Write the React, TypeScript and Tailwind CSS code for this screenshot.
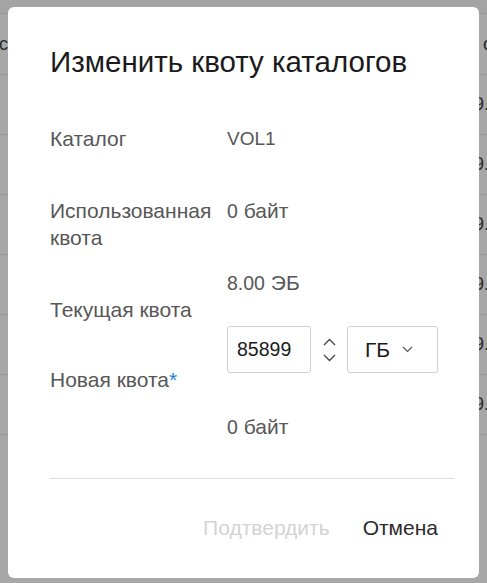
import React from "react";

const font = { fontFamily: '"Liberation Sans", Arial, sans-serif' };

function BgRow({ right }: { right: string }) {
  return (
    <div className="h-[60px] border-b border-[#989898] flex items-center justify-end text-[18px] text-[#2a2a2a]">
      <span className="-mr-[2px]">{right}</span>
    </div>
  );
}

export default function App() {
  return (
    <div className="relative w-[487px] h-[583px] bg-[#a7a7a7] overflow-hidden" style={font}>
      {/* background table */}
      <div className="h-[14px] bg-[#a4a4a4] border-b border-[#989898]" />
      <div className="flex flex-col">
        <div className="h-[61px] border-b border-[#989898] flex items-center justify-between text-[18px] text-[#2a2a2a]">
          <span className="-ml-[1px]">ст</span>
          <span className="-mr-[6px]">о</span>
        </div>
        <BgRow right="9." />
        <BgRow right="9." />
        <BgRow right="9." />
        <BgRow right="9." />
        <BgRow right="9." />
        <BgRow right="9." />
      </div>

      {/* modal */}
      <div className="absolute left-[8px] top-[7px] w-[471px] h-[571px] bg-white rounded-[6px] pl-[42px] pr-[25px]">
        <h2 className="pt-[38px] text-[29.5px] leading-[34px] text-[#1b1b1b] whitespace-nowrap">Изменить квоту каталогов</h2>

        <div className="text-[21px] leading-[27px] text-[#575757]">
          <div className="flex mt-[46px]">
            <div className="w-[177px]">Каталог</div>
            <div className="text-[19px]">VOL1</div>
          </div>

          <div className="flex mt-[45px]">
            <div className="w-[177px]">Использованная квота</div>
            <div>
              <span className="text-[19.5px]">0</span> байт
            </div>
          </div>

          <div className="flex mt-[18px]">
            <div className="w-[177px] flex flex-col pt-[27px]">
              <div>Текущая квота</div>
              <div className="mt-[43px]">
                Новая квота<span className="text-[#1e7fd8]">*</span>
              </div>
            </div>
            <div className="flex flex-col">
              <div>
                <span className="text-[19.5px]">8.00</span> ЭБ
              </div>
              <div className="flex items-center mt-[29px]">
                <div className="w-[84px] h-[47px] border border-[#cfcfcf] rounded-[3px] flex items-center pl-[9px] text-[19.5px] text-[#1b1b1b]">
                  85899
                </div>
                <div className="w-[36px] h-[47px] flex flex-col items-center justify-center gap-[8px]">
                  <svg width="13" height="8" viewBox="0 0 13 8" fill="none">
                    <path d="M1 7L6.5 1.5L12 7" stroke="#444" strokeWidth="1.3" />
                  </svg>
                  <svg width="13" height="8" viewBox="0 0 13 8" fill="none">
                    <path d="M1 1L6.5 6.5L12 1" stroke="#444" strokeWidth="1.3" />
                  </svg>
                </div>
                <div className="w-[91px] h-[47px] border border-[#cfcfcf] rounded-[3px] flex items-center pl-[17px] text-[21px] text-[#1b1b1b]">
                  <span>ГБ</span>
                  <svg className="ml-[12px]" width="11" height="7" viewBox="0 0 11 7" fill="none">
                    <path d="M1 1L5.5 5.5L10 1" stroke="#555" strokeWidth="1.2" />
                  </svg>
                </div>
              </div>
              <div className="mt-[40px]">
                <span className="text-[19.5px]">0</span> байт
              </div>
            </div>
          </div>
        </div>

        <div className="mt-[37px] border-t border-[#dedede]" />

        <div className="flex justify-end items-center mt-[35px] text-[21px] leading-[27px] pr-[16px]">
          <span className="text-[#d3d3d3]">Подтвердить</span>
          <span className="ml-[33px] text-[#2b2b2b]">Отмена</span>
        </div>
      </div>
    </div>
  );
}
